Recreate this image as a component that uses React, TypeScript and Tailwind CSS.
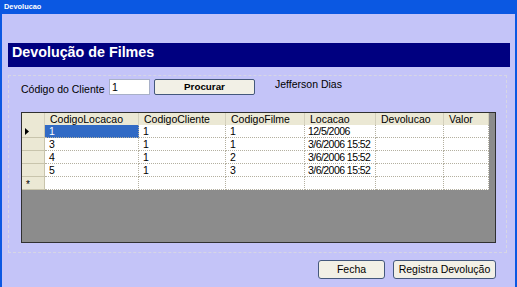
import React from 'react';

const cols = [
  { name: 'CodigoLocacao', w: 'w-[94px]' },
  { name: 'CodigoCliente', w: 'w-[87px]' },
  { name: 'CodigoFilme', w: 'w-[79px]' },
  { name: 'Locacao', w: 'w-[71px]' },
  { name: 'Devolucao', w: 'w-[68px]' },
  { name: 'Valor', w: 'w-[45px]' },
];

const rows = [
  ['1', '1', '1', '12/5/2006', '', ''],
  ['3', '1', '1', '3/6/2006 15:52', '', ''],
  ['4', '1', '2', '3/6/2006 15:52', '', ''],
  ['5', '1', '3', '3/6/2006 15:52', '', ''],
];

function Arrow() {
  return (
    <svg width="4" height="7" viewBox="0 0 4 7" className="block">
      <path d="M0 0 L4 3.5 L0 7 Z" fill="#000" />
    </svg>
  );
}

function Grid() {
  return (
    <div className="ml-[12px] mt-[17px] w-[475px] h-[131px] border border-[#303030] bg-[#8c8c8c] flex flex-col">
      <div className="flex h-[12px] leading-[12px]">
        <div className="w-[23px] h-full bg-[#ebe8d4] border-r border-[#d4d0bc]" />
        {cols.map((c) => (
          <div
            key={c.name}
            className={`${c.w} h-full bg-[#ebe8d4] border-r border-[#d4d0bc] pl-[5px] text-black whitespace-nowrap overflow-hidden`}
          >
            {c.name}
          </div>
        ))}
      </div>
      {rows.map((r, i) => (
        <div key={i} className="flex h-[13px] leading-[13px]">
          <div className="w-[23px] h-full bg-[#ebe8d4] border-r border-b border-[#c8c4ac] flex items-center pl-[3px]">
            {i === 0 ? <Arrow /> : null}
          </div>
          {cols.map((c, j) => {
            const sel = i === 0 && j === 0;
            return (
              <div
                key={c.name}
                className={
                  sel
                    ? `${c.w} h-full bg-[#316ac5] text-white border-r border-b border-dotted border-[#b4b0a0] pl-[4px] whitespace-nowrap overflow-hidden`
                    : j === 3
                    ? `${c.w} h-full bg-white text-black border-r border-b border-dotted border-[#b4b0a0] pl-[3px] tracking-[-0.55px] whitespace-nowrap overflow-hidden`
                    : `${c.w} h-full bg-white text-black border-r border-b border-dotted border-[#b4b0a0] pl-[4px] whitespace-nowrap overflow-hidden`
                }
              >
                {r[j]}
              </div>
            );
          })}
        </div>
      ))}
      <div className="flex h-[13px] leading-[13px]">
        <div className="w-[23px] h-full bg-[#ebe8d4] border-r border-b border-[#c8c4ac] pl-[4px] text-[10px] leading-[15px] text-black">
          *
        </div>
        {cols.map((c) => (
          <div
            key={c.name}
            className={`${c.w} h-full bg-white border-r border-b border-dotted border-[#b4b0a0]`}
          />
        ))}
      </div>
    </div>
  );
}

export default function App() {
  return (
    <div className="w-[517px] h-[287px] bg-[#0b58e2] flex flex-col overflow-hidden font-['Liberation_Sans',Arial,sans-serif] text-[10.5px] leading-[12px] text-black">
      <div className="h-[14px] px-[4px] flex items-center text-white font-bold text-[7.4px] leading-[8px]">
        Devolucao
      </div>
      <div className="flex-1 mx-[2px] bg-[#c4c4f8] flex flex-col pt-[29px]">
        <div className="ml-[6px] mr-[5px] h-[24px] bg-[#000080] pl-[4px] pt-[2px]">
          <span className="text-white font-bold text-[14.3px] leading-[14px] whitespace-nowrap">
            Devolução de Filmes
          </span>
        </div>
        <div className="ml-[6px] mr-[8px] mt-[8px] h-[178px] border border-dashed border-[#d6d6e4] flex flex-col">
          <div className="flex items-start pl-[12px] pt-[3px] h-[19px]">
            <div className="w-[88px] mt-[4px] whitespace-nowrap">Código do Cliente</div>
            <div className="w-[41px] h-[16px] bg-white border border-[#a8b0c8] pl-[2px] leading-[14px]">
              1
            </div>
            <button className="ml-[4px] w-[101px] h-[16px] rounded-[2px] border border-[#44587c] bg-[#f2f0e6] font-bold text-[9.8px] leading-[14px] text-black">
              Procurar
            </button>
            <div className="ml-[20px] mt-[-1px] whitespace-nowrap">Jefferson Dias</div>
          </div>
          <Grid />
        </div>
        <div className="flex justify-end gap-[8px] mt-[7px] mr-[19px]">
          <button className="w-[67px] h-[19px] rounded-[3px] border border-[#44587c] bg-[#f2f0e6] text-black text-[10.5px] leading-[17px]">
            Fecha
          </button>
          <button className="w-[103px] h-[19px] rounded-[3px] border border-[#44587c] bg-[#f2f0e6] text-black text-[10.5px] leading-[17px] whitespace-nowrap">
            Registra Devolução
          </button>
        </div>
      </div>
    </div>
  );
}
